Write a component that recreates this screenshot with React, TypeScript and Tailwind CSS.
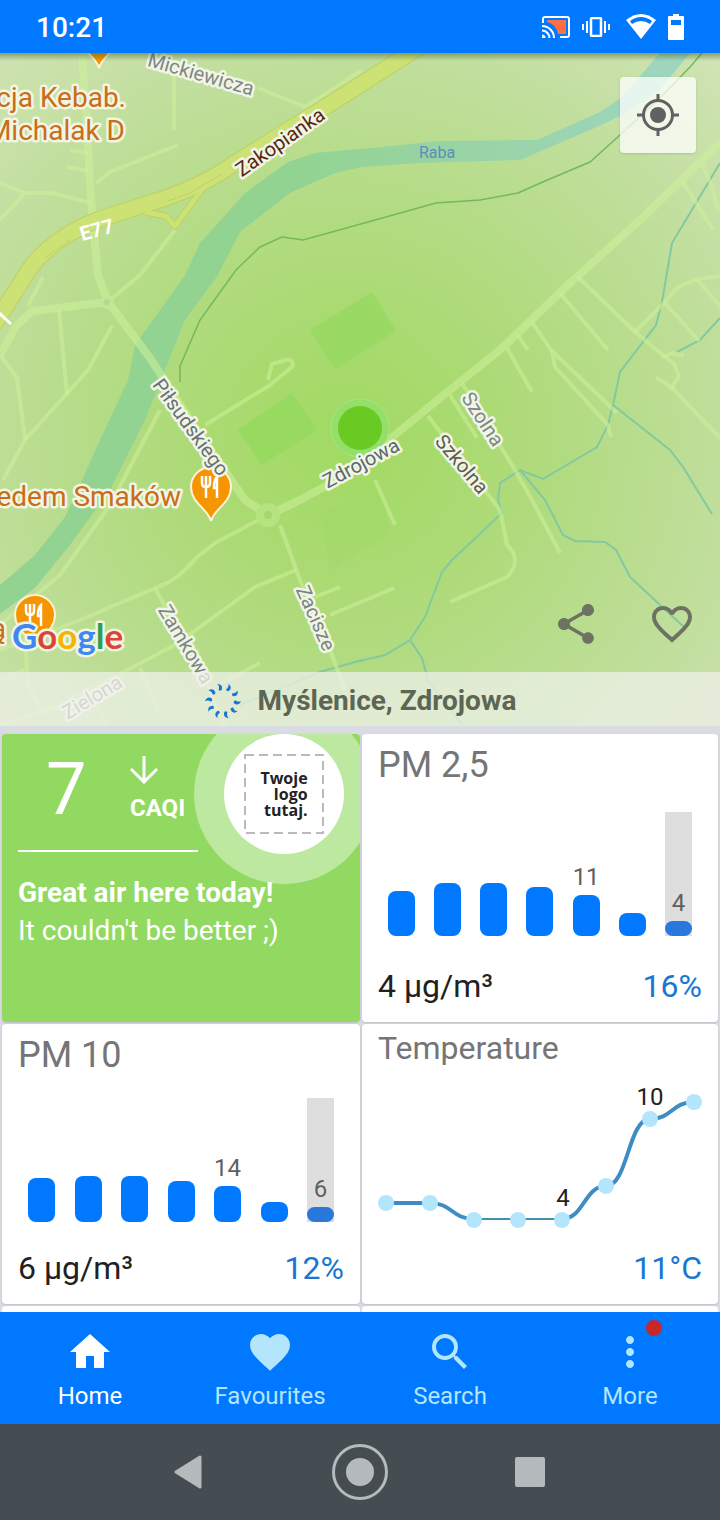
import React from 'react';
import { MdFavorite, MdFavoriteBorder, MdHome, MdMoreVert, MdSearch, MdShare } from 'react-icons/md';

interface StreetLabel {
  text: string;
  x: number;
  y: number;
  angle: number;
  color: string;
}

interface BarCardProps {
  title: string;
  value: string;
  percent: string;
  bars: { height: number; label?: string }[];
}

const mainRoads = [
  'M82 53L87 130L91 200L98 275L108 302L150 358L190 420L245 500L268 515',
  'M268 515L292 504L345 476L440 398L500 350L570 283L640 220L720 143',
  'M107 302L32 311L16 326L0 355',
];

const smallRoads = [
  'M175 230L140 275L110 300',
  'M28 306L43 277',
  'M59 310L67 395',
  'M112 326L88 370L25 440L3 480',
  'M0 355L17 378L25 440',
  'M0 183L25 193L52 193L92 203M25 193L0 220',
  'M174 60V130',
  'M96 183L110 172L178 145',
  'M258 88L305 107L362 70',
  'M70 150L88 153M67 167L88 171',
  'M577 276L635 332L674 364L679 376L672 388',
  'M656 377L672 388L722 440',
  'M635 332L662 305L678 287L697 279L720 276',
  'M665 303L699 341M697 280L722 308M662 357L672 353L684 356',
  'M560 293L608 350',
  'M532 322L551 350L617 413M552 350L555 367L608 425L611 437',
  'M507 348L532 392M518 335L528 350',
  'M462 383L515 470L532 500L560 553',
  'M450 395L477 438',
  'M428 416L500 510L507 545Q523 560 507 577L450 602',
  'M683 182L713 230M702 163L712 187L718 210',
  'M268 515L215 543L196 558Q178 580 160 586L80 620L0 650',
  'M280 525L300 580L330 650L345 690',
  'M296 570L255 587L175 645L60 705L0 726',
  'M155 588L205 680L225 726',
  'M140 668L160 715M95 700L107 726',
  'M222 683L260 663M330 615L394 588M315 597L340 587',
  'M25 640L28 685L45 715M0 680L28 668',
  'M160 410L110 505L60 575L0 625',
  'M205 425L270 385L293 366Q292 358 286 360L272 364L268 380',
  'M375 480L395 525',
];

const streams = [
  'M720 163L672 243L662 302L656 325L620 372L613 405L608 425L597 447L543 479L520 470L500 483L498 500L502 513L452 560L442 572L425 617L410 640L385 655L355 662',
  'M410 640L422 658L428 680L462 725',
  'M613 405L670 450L683 467L712 514',
  'M520 470L545 500L563 535L575 541L605 542L616 550L630 577L660 605L684 627',
  'M720 318L700 340L677 352',
  'M240 705L320 672L362 660',
];

const streets: StreetLabel[] = [
  { text: 'Mickiewicza', x: 201, y: 74, angle: 16, color: '#7f8787' },
  { text: 'Zakopianka', x: 280, y: 142, angle: -35, color: '#5a2713' },
  { text: 'Piłsudskiego', x: 191, y: 427, angle: 54, color: '#66707a' },
  { text: 'Zdrojowa', x: 361, y: 463, angle: -28, color: '#5b6770' },
  { text: 'Szkolna', x: 462, y: 464, angle: 50, color: '#5d5c56' },
  { text: 'Szolna', x: 483, y: 419, angle: 57, color: '#7c8588' },
  { text: 'Zacisze', x: 316, y: 618, angle: 66, color: '#7c8588' },
  { text: 'Zamkowa', x: 186, y: 644, angle: 59, color: '#7c8588' },
  { text: 'Zielona', x: 92, y: 697, angle: -31, color: '#8c8c8c' },
];

const Pin = ({ x, y }: { x: number; y: number }) => (
  <g transform={`translate(${x} ${y})`}>
    <path
      d="M0 34C-3 22-20 16-20 0A20 20 0 0 1 20 0C20 16 3 22 0 34Z"
      fill="#f59502"
      stroke="#fff3d6"
      strokeWidth="2"
    />
    <path
      d="M-9-11V-4Q-9 0-5 0V11M-5-11V0M-1-11V-4Q-1 0-5 0M6 11V-10Q3-8 3 1H6"
      fill="none"
      stroke="#fff"
      strokeWidth="2.5"
    />
  </g>
);

const CityMap = () => (
  <svg
    viewBox="0 53 720 673"
    preserveAspectRatio="xMidYMid slice"
    className="block h-[673px] w-full font-[Roboto,sans-serif]"
    role="img"
    aria-label="Map of Myślenice"
  >
    <defs>
      <radialGradient id="heat" gradientUnits="userSpaceOnUse" cx="345" cy="440" r="540">
        <stop offset="0" stopColor="#a1da63" />
        <stop offset="0.25" stopColor="#abda73" />
        <stop offset="0.5" stopColor="#b6dc89" />
        <stop offset="0.75" stopColor="#c3dfa0" />
        <stop offset="1" stopColor="#d0e3b5" />
      </radialGradient>
      <linearGradient id="river" gradientUnits="userSpaceOnUse" x1="300" y1="0" x2="690" y2="0">
        <stop offset="0" stopColor="#93d392" />
        <stop offset="1" stopColor="#9fd5c0" />
      </linearGradient>
      <linearGradient id="barShadow" x1="0" y1="0" x2="0" y2="1">
        <stop offset="0" stopColor="#3f5a30" stopOpacity="0.5" />
        <stop offset="1" stopColor="#3f5a30" stopOpacity="0" />
      </linearGradient>
    </defs>
    <rect y="53" width="720" height="673" fill="url(#heat)" />

    <path
      d="M0 585L35 555L65 517L82 480L100 440L128 380L135 345L185 275L200 243L245 193L288 162L315 153L382 147L440 141L537 140L600 112L622 97L660 53H690L658 92L622 115L597 127L520 160L420 163L362 167L335 173L290 193L240 232L218 275L185 320L165 370L145 420L110 490L70 545L35 588L0 614Z"
      fill="url(#river)"
    />
    <path d="M310 330L372 292L396 331L335 370Z" fill="#9bd965" />
    <path d="M238 430L292 393L317 430L262 465Z" fill="#98d960" />
    <path d="M320 515L378 482L390 535L330 570Z" fill="#9cd866" opacity="0.3" />

    <g fill="none" stroke="#83c9a0" strokeWidth="2">
      {streams.map(d => (
        <path key={d} d={d} />
      ))}
    </g>
    <path
      d="M180 382V366L200 320L236 270L260 247L282 237L303 240L350 227L436 203L480 200L518 193L545 181L590 162L620 135L660 98L690 67L702 53"
      fill="none"
      stroke="#74b95b"
      strokeWidth="1.5"
    />

    <g fill="none" stroke="#cdf09a" strokeOpacity="0.55" strokeLinejoin="round">
      {smallRoads.map(d => (
        <path key={d} d={d} strokeWidth="4" />
      ))}
      {mainRoads.map(d => (
        <path key={d} d={d} strokeWidth="8" />
      ))}
    </g>
    <circle cx="107" cy="302" r="7" fill="#c3e59a" />
    <circle cx="107" cy="302" r="3" fill="#b5d88c" />
    <circle cx="268" cy="515" r="12" fill="#b5e37d" />
    <circle cx="268" cy="515" r="4" fill="#a5d56e" />

    <g fill="none" strokeLinejoin="round">
      <path
        d="M430 40L330 104L235 163Q200 188 150 203L100 219Q55 236 30 268L-6 325"
        stroke="#bdd066"
        strokeWidth="17"
      />
      <path d="M203 188L175 226L166 216L145 212" stroke="#bdd066" strokeWidth="7" />
      <path d="M203 188L175 226L166 216L145 212" stroke="#cde275" strokeWidth="5" />
      <path
        d="M430 40L330 104L235 163Q200 188 150 203L100 219Q55 236 30 268L-6 325"
        stroke="#cde275"
        strokeWidth="15"
      />
      <path d="M222 174L190 193L168 201M70 240L45 258" stroke="#bdd066" strokeWidth="1" />
      <path d="M-2 312L11 324" stroke="#fff" strokeWidth="3" />
    </g>

    <circle cx="360" cy="428" r="29" fill="#93df68" stroke="#a9e386" strokeWidth="1" />
    <circle cx="360" cy="428" r="22" fill="#68ca22" />

    <Pin x={211} y={487} />
    <Pin x={35} y={615} />
    <Pin x={99} y={34} />

    <g strokeWidth="5" stroke="#f1f6e4" strokeLinejoin="round" paintOrder="stroke">
      {streets.map(s => (
        <text
          key={s.text}
          transform={`translate(${s.x} ${s.y}) rotate(${s.angle})`}
          textAnchor="middle"
          dominantBaseline="central"
          fontSize="20"
          fill={s.color}
        >
          {s.text}
        </text>
      ))}
      <g fontSize="28" textAnchor="end" fill="#cb6d17">
        <text x="126" y="107">cja Kebab.</text>
        <text x="125" y="140">Michalak D</text>
        <text x="181" y="506">edem Smaków</text>
        <text x="6" y="638">ą</text>
      </g>
    </g>
    <text transform="translate(82 241) rotate(-15)" fontSize="20" fontWeight="700" fill="#fff">
      E77
    </text>
    <text x="419" y="158" fontSize="16" fill="#5a8fbd">
      Raba
    </text>

    <text
      x="12"
      y="649"
      fontSize="35"
      fontWeight="700"
      className="font-[Lato,sans-serif]"
      stroke="#eef6e2"
      strokeWidth="5"
      strokeLinejoin="round"
      paintOrder="stroke"
    >
      <tspan fill="#4285f4">G</tspan>
      <tspan fill="#dc4437">o</tspan>
      <tspan fill="#f4b400">o</tspan>
      <tspan fill="#4285f4">g</tspan>
      <tspan fill="#2f9e55">l</tspan>
      <tspan fill="#dc4437">e</tspan>
    </text>
    <rect y="53" width="720" height="8" fill="url(#barShadow)" />
  </svg>
);

const StatusBar = () => (
  <header className="flex h-[53px] shrink-0 items-center justify-between bg-[#0078ff] pr-9 pl-9 text-white">
    <span className="pt-0.5 text-[28px] leading-8 font-medium">10:21</span>
    <div className="flex items-center">
      <svg width="28" height="22" viewBox="0 0 28 22" fill="none" className="mr-3">
        <path d="M5 4H24V18H16Q14 8 5 6Z" fill="#ff6f43" />
        <path d="M1 7V3Q1 1 3 1H25Q27 1 27 3V19Q27 21 25 21H18" stroke="#fff" strokeWidth="2" />
        <path d="M0 10A12 12 0 0 1 12 22M0 14.500A7.500 7.500 0 0 1 7.500 22" stroke="#fff" strokeWidth="2" />
        <path d="M0 18.500A3.500 3.500 0 0 1 3.500 22H0Z" fill="#fff" />
      </svg>
      <svg width="28" height="20" viewBox="0 0 28 20" fill="none" stroke="#fff" className="mr-4">
        <rect x="9" y="1" width="10" height="18" rx="1" strokeWidth="2.500" />
        <path d="M5 4V16M23 4V16M1 7V13M27 7V13" strokeWidth="2" />
      </svg>
      <svg width="30" height="26" viewBox="0 0 30 26" className="mr-3">
        <path d="M0 6Q15-6 30 6L15 25Z" fill="#fff" />
        <path d="M4 7Q15-1 26 7L24 10Q15 4 6 10Z" fill="#0078ff" />
      </svg>
      <svg width="16" height="26" viewBox="0 0 16 26">
        <path d="M5 0H11V2H15Q16 2 16 3V25Q16 26 15 26H1Q0 26 0 25V3Q0 2 1 2H5Z" fill="#fff" />
        <path d="M3 6H13V11H3Z" fill="#0078ff" />
      </svg>
    </div>
  </header>
);

const Spinner = () => (
  <svg width="38" height="38" viewBox="-19 -19 38 38">
    {[0, 36, 72, 108, 144, 180, 216, 252, 288, 324].map(angle => (
      <path
        key={angle}
        transform={`rotate(${angle + 24})`}
        d="M-2-18Q4-16 1-11Q-1-10-2-12Q0-15-2-18Z"
        fill="#1976d2"
      />
    ))}
  </svg>
);

const BarCard: React.FC<BarCardProps> = ({ title, value, percent, bars }) => (
  <article className="flex flex-col rounded bg-white px-4 pt-[11px] pb-4 shadow-sm">
    <h2 className="text-4xl leading-10 text-[#757575]">{title}</h2>
    <div className="flex flex-1 items-center pb-1">
      <div className="flex h-[124px] flex-1 items-end justify-between px-2.5">
        {bars.map((bar, index) => {
          const current = index === bars.length - 1;
          return (
            <div
              key={index}
              className={`flex w-[27px] flex-col items-center justify-end ${current ? 'h-full bg-[#dedede]' : ''}`}
            >
              {bar.label && (
                <span className="mb-1 text-2xl leading-7 text-[#606060]">{bar.label}</span>
              )}
              <div
                className={`w-full rounded-lg ${current ? 'bg-[#2979dc]' : 'bg-[#0078ff]'}`}
                style={{ height: bar.height }}
              />
            </div>
          );
        })}
      </div>
    </div>
    <div className="flex justify-between text-[32px] leading-10">
      <span className="text-[#212121]">{value}</span>
      <span className="text-[#1976d2]">{percent}</span>
    </div>
  </article>
);

const AirQualityCard = () => (
  <article className="relative overflow-hidden rounded bg-[#92d961] px-4 pt-5 text-white shadow-sm">
    <div className="flex w-[180px] border-b-2 border-white pb-6 pl-7">
      <span className="w-[84px] text-7xl leading-[72px]">7</span>
      <div className="flex flex-col gap-2.5 pt-0.5">
        <svg width="28" height="28" viewBox="0 0 28 28" fill="none" stroke="#fff" strokeWidth="3">
          <path d="M14 0V25M1 13L14 26L27 13" />
        </svg>
        <span className="text-2xl leading-7 font-bold">CAQI</span>
      </div>
    </div>
    <p className="mt-[22px] text-[28px] leading-[38px] font-bold">Great air here today!</p>
    <p className="text-[28px] leading-[38px]">It couldn't be better ;)</p>
    <div className="absolute -top-[30px] -right-[14px] flex size-[180px] items-center justify-center rounded-full bg-white/40">
      <div className="flex size-[120px] items-center justify-center rounded-full bg-white">
        <div className="relative flex size-20 items-center justify-center">
          <svg viewBox="0 0 80 80" className="absolute inset-0" fill="none">
            <rect x="1" y="1" width="78" height="78" stroke="#bdb8bd" strokeWidth="2" strokeDasharray="9 5" />
          </svg>
          <p className="text-right font-['Open_Sans',sans-serif] text-base leading-4 font-bold text-[#222]">
            Twoje
            <br />
            logo
            <br />
            tutaj.
          </p>
        </div>
      </div>
    </div>
  </article>
);

const points = [
  [24, 134],
  [68, 134],
  [112, 151],
  [156, 151],
  [200, 151],
  [244, 117],
  [288, 50],
  [332, 33],
];

const TemperatureCard = () => (
  <article className="flex flex-col rounded bg-white pt-1 pb-4 shadow-sm">
    <h2 className="px-4 text-[32px] leading-10 text-[#757575]">Temperature</h2>
    <div className="flex flex-1 items-center">
      <svg viewBox="0 0 356 178" className="w-full" fill="none">
        <path d="M24 134H68C90 134 90 150 112 150" stroke="#3f8cc5" strokeWidth="4" />
        <path d="M112 150H200" stroke="#438fae" strokeWidth="2" />
        <path
          d="M200 150C222 150 222 117 244 117C266 117 266 50 288 50C310 50 310 33 332 33"
          stroke="#3f8cc5"
          strokeWidth="4"
        />
        {points.map(([x, y]) => (
          <circle key={x} cx={x} cy={y} r="8" fill="#b3e5fc" />
        ))}
        <g fontSize="24" fill="#212121" textAnchor="middle">
          <text x="201" y="137">4</text>
          <text x="288" y="36">10</text>
        </g>
      </svg>
    </div>
    <p className="px-4 text-right text-[32px] leading-10 text-[#1976d2]">11°C</p>
  </article>
);

const tabs = [
  { label: 'Home', icon: MdHome, active: true },
  { label: 'Favourites', icon: MdFavorite },
  { label: 'Search', icon: MdSearch },
  { label: 'More', icon: MdMoreVert, badge: true },
];

const TabBar = () => (
  <nav className="grid shrink-0 grid-cols-4 bg-[#0078ff] pt-4 pb-3.5">
    {tabs.map(({ label, icon: Icon, active, badge }) => (
      <button
        key={label}
        className={`flex flex-col items-center gap-1.5 ${active ? 'text-white' : 'text-[#b3e5fc]'}`}
      >
        <span className="relative">
          <Icon className="size-12" />
          {badge && (
            <span className="absolute -top-2 -right-2 size-4 rounded-full bg-[#c62828]" />
          )}
        </span>
        <span className="text-2xl leading-7">{label}</span>
      </button>
    ))}
  </nav>
);

const SystemBar = () => (
  <footer className="flex h-24 shrink-0 items-center justify-center bg-[#454d52]">
    <button aria-label="Back" className="flex w-[170px] justify-center">
      <svg width="32" height="36" viewBox="0 0 32 36">
        <path d="M2 18L26 3V33Z" fill="#b5babc" stroke="#b5babc" strokeWidth="3" strokeLinejoin="round" />
      </svg>
    </button>
    <button aria-label="Home screen" className="flex w-[170px] justify-center">
      <svg width="56" height="56" viewBox="0 0 56 56">
        <circle cx="28" cy="28" r="26.500" fill="none" stroke="#b5babc" strokeWidth="3" />
        <circle cx="28" cy="28" r="14" fill="#b5babc" />
      </svg>
    </button>
    <button aria-label="Recent apps" className="flex w-[170px] justify-center">
      <span className="size-[30px] rounded-xs bg-[#b5babc]" />
    </button>
  </footer>
);

const App = () => (
  <div className="flex h-screen flex-col bg-[#d9dce2] font-[Roboto,sans-serif]">
    <StatusBar />
    <section className="relative shrink-0">
      <CityMap />
      <button
        aria-label="My location"
        className="absolute top-6 right-6 flex size-[76px] items-center justify-center rounded bg-white/75 shadow"
      >
        <svg width="42" height="42" viewBox="0 0 42 42" fill="none" stroke="#616161" strokeWidth="3">
          <circle cx="21" cy="21" r="14.500" />
          <circle cx="21" cy="21" r="8" fill="#616161" stroke="none" />
          <path d="M21 0V6M21 36V42M0 21H6M36 21H42" />
        </svg>
      </button>
      <div className="absolute right-6 bottom-[78px] flex gap-12 text-[#6c7363]">
        <button aria-label="Share">
          <MdShare className="size-12" />
        </button>
        <button aria-label="Add to favourites">
          <MdFavoriteBorder className="size-12" />
        </button>
      </div>
      <div className="absolute inset-x-0 bottom-0 flex h-[54px] items-center justify-center gap-4 bg-[#eef0ea]/75 pt-1">
        <Spinner />
        <h1 className="text-[28px] leading-9 font-bold text-[#5d6653]">Myślenice, Zdrojowa</h1>
      </div>
    </section>
    <main className="grid min-h-0 flex-1 grid-cols-[358fr_356fr] grid-rows-[288px_280px_8px] gap-0.5 overflow-hidden px-0.5 pt-2">
      <AirQualityCard />
      <BarCard
        title="PM 2,5"
        value="4 µg/m³"
        percent="16%"
        bars={[
          { height: 45 },
          { height: 53 },
          { height: 53 },
          { height: 49 },
          { height: 41, label: '11' },
          { height: 23 },
          { height: 15, label: '4' },
        ]}
      />
      <BarCard
        title="PM 10"
        value="6 µg/m³"
        percent="12%"
        bars={[
          { height: 44 },
          { height: 46 },
          { height: 46 },
          { height: 41 },
          { height: 36, label: '14' },
          { height: 20 },
          { height: 15, label: '6' },
        ]}
      />
      <TemperatureCard />
      <div className="rounded-t bg-white" />
      <div className="rounded-t bg-white" />
    </main>
    <TabBar />
    <SystemBar />
  </div>
);

export default App;
